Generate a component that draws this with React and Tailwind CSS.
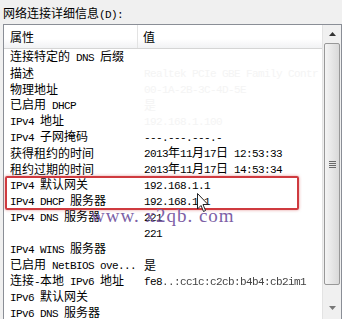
import React from "react";

// split mixed text so ascii gets half-width mono, like the old SimSun look
const Mixed = ({ text }) => {
  const parts = text.split(/([\x20-\x7e]+)/).filter(Boolean);
  return parts.map((p, i) =>
    /^[\x20-\x7e]+$/.test(p) ? (
      <span key={i} className="font-['Liberation_Mono',monospace] text-[11px] tracking-[-0.6px]">
        {p}
      </span>
    ) : (
      <span key={i}>{p}</span>
    )
  );
};

const rows = [
  { name: "连接特定的 DNS 后缀", value: "" },
  { name: "描述", value: "Realtek PCIe GBE Family Contr", faint: true },
  { name: "物理地址", value: "00-1A-2B-3C-4D-5E", faint: true },
  { name: "已启用 DHCP", value: "是", faint: true },
  { name: "IPv4 地址", value: "192.168.1.100", faint: true },
  { name: "IPv4 子网掩码", value: "---.---.---.-" },
  { name: "获得租约的时间", value: "2013年11月17日 12:53:33" },
  { name: "租约过期的时间", value: "2013年11月17日 14:53:34" },
  { name: "IPv4 默认网关", value: "192.168.1.1" },
  { name: "IPv4 DHCP 服务器", value: "192.168.1.1" },
  { name: "IPv4 DNS 服务器", value: "221" },
  { name: "", value: "221" },
  { name: "IPv4 WINS 服务器", value: "" },
  { name: "已启用 NetBIOS ove...", value: "是" },
  { name: "连接-本地 IPv6 地址", value: "fe8", blurred: "..:cc1c:c2cb:b4b4:cb2im1" },
  { name: "IPv6 默认网关", value: "" },
  { name: "IPv6 DNS 服务器", value: "" },
];

const Scrollbar = () => (
  <div className="w-[19px] flex flex-col bg-[#f0f0f0] border-l border-[#e3e3e3]">
    <div className="h-[18px] flex items-center justify-center">
      <svg width="7" height="4" viewBox="0 0 7 4">
        <path d="M0 4 L3.5 0 L7 4 Z" fill="#333" />
      </svg>
    </div>
    <div className="mx-[1px] h-[242px] rounded-[2px] border border-[#989898] bg-gradient-to-r from-[#f4f4f4] to-[#d9d9d9] flex items-center justify-center">
      <div className="flex flex-col gap-[1px]">
        <div className="w-[7px] h-[1px] bg-[#6a6a6a]" />
        <div className="w-[7px] h-[1px] bg-[#6a6a6a]" />
        <div className="w-[7px] h-[1px] bg-[#6a6a6a]" />
        <div className="w-[7px] h-[1px] bg-[#6a6a6a]" />
      </div>
    </div>
    <div className="h-[14px]" />
    <div className="h-[18px] flex items-center justify-center">
      <svg width="7" height="4" viewBox="0 0 7 4">
        <path d="M0 0 L3.5 4 L7 0 Z" fill="#777" />
      </svg>
    </div>
  </div>
);

export default function App() {
  return (
    <div className="relative w-[342px] h-[319px] overflow-hidden bg-[#f0f0f0] text-black text-[12px] leading-[16px] font-['Noto_Sans_CJK_SC',sans-serif]">
      <div className="h-[24px] pl-[3px] pt-[5px] whitespace-pre">
        <Mixed text="网络连接详细信息(D):" />
      </div>

      <div className="ml-[3px] w-[339px] h-[320px] border border-[#8a8e96] bg-white flex">
        <div className="flex-1 flex flex-col">
          <div className="h-[24px] flex border-b border-[#d5d5d5] bg-gradient-to-b from-white from-60% to-[#f1f2f4]">
            <div className="w-[134px] pl-[6px] flex items-center border-r border-[#e3e3e3]">属性</div>
            <div className="pl-[5px] flex items-center">值</div>
          </div>
          <div className="flex flex-col whitespace-pre">
            {rows.map((r, i) => (
              <div key={i} className="h-[16px] flex items-center">
                <div className="w-[134px] pl-[6px]">
                  <Mixed text={r.name} />
                </div>
                <div className={`pl-[6px] ${r.faint ? "text-[#f4f4f4]" : "text-black"}`}>
                  <Mixed text={r.value} />
                  {r.blurred && (
                    <span className="font-['Liberation_Mono',monospace] text-[11px] tracking-[-0.6px] text-[#444] blur-[0.5px]">
                      {r.blurred}
                    </span>
                  )}
                </div>
              </div>
            ))}
          </div>
        </div>
        <Scrollbar />
      </div>

      {/* red highlight box */}
      <div className="absolute left-[5px] top-[176px] w-[294px] h-[34px] border-2 border-[#cf3a3f] rounded-[2px] shadow-[0_0_3px_rgba(200,40,40,0.5)]" />

      {/* watermark */}
      <div className="absolute left-[91px] top-[206px] text-[19px] leading-[20px] tracking-[1px] text-[#7d5fa6] font-['Liberation_Serif',serif] whitespace-pre">
        www. x2qb. com
      </div>

      {/* mouse cursor */}
      <svg className="absolute left-[197px] top-[193px]" width="12" height="20" viewBox="0 0 12 20">
        <path d="M0.5 0.5 L0.5 16 L4 12.5 L6.5 18.5 L8.5 17.5 L6 11.5 L11 11.5 Z" fill="white" stroke="#222" strokeWidth="1" />
      </svg>
    </div>
  );
}
